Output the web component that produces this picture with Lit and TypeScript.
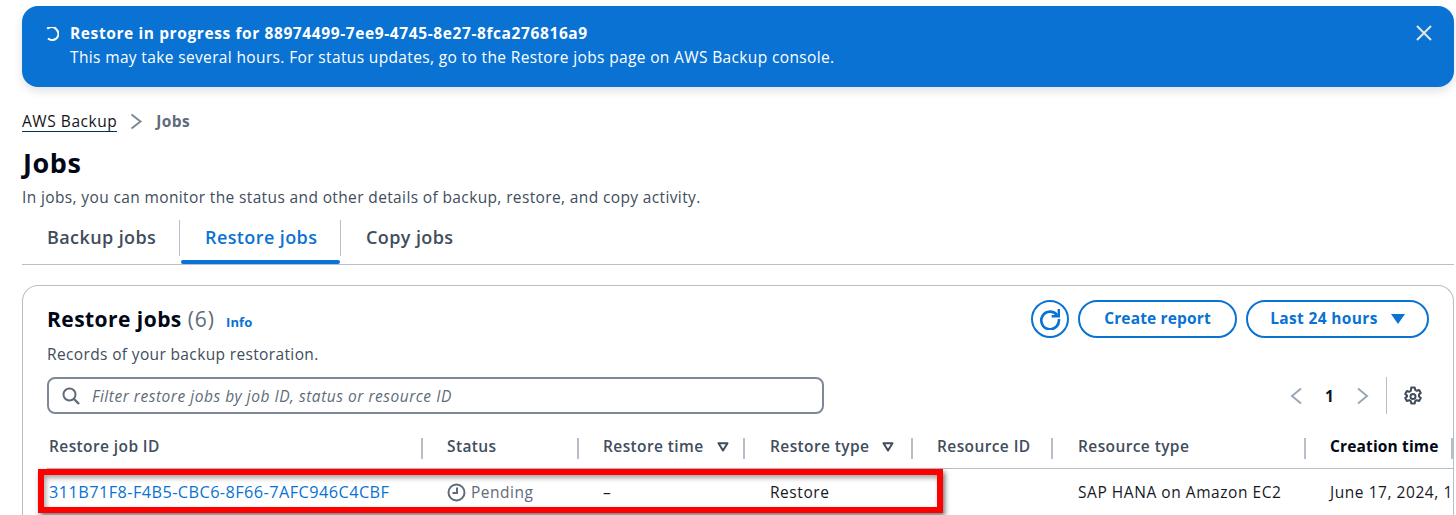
import { LitElement, html, css } from "lit";
import { customElement } from "lit/decorators.js";

const cols = [
  { label: "Restore job ID", cell: "link" },
  { label: "Status", cell: "status" },
  { label: "Restore time", sort: true, cell: "–" },
  { label: "Restore type", sort: true, cell: "Restore" },
  { label: "Resource ID", cell: "" },
  { label: "Resource type", cell: "SAP HANA on Amazon EC2" },
  { label: "Creation time", dark: true, cell: "June 17, 2024, 1" },
];

@customElement("app-root")
export class AppRoot extends LitElement {
  static styles = css`
    :host { display: block; width: 1456px; height: 515px; overflow: hidden; background: #fff; position: relative;
      font-family: "Open Sans", "Noto Sans", sans-serif; font-size: 15.5px; letter-spacing: .36px; color: #0f141a; }
    .page { padding: 6px 2px 0 22px; display: flex; flex-direction: column; }
    .flash { height: 81px; box-sizing: border-box; background: #0972d3; border-radius: 16px; color: #fff; display: flex;
      padding: 15px 22px 0 23px; box-shadow: 0 4px 10px rgba(0,7,22,.12); line-height: 24px; }
    .flash .spin { width: 14px; height: 14px; margin: 6px 11px 0 0; flex: none; }
    .flash .msg { flex: 1; }
    .flash b { font-weight: 700; display: block; letter-spacing: .6px; }
    .flash .x { width: 16px; height: 16px; margin-top: 4px; flex: none; }
    .crumbs { display: flex; align-items: center; height: 24px; margin-top: 22px; }
    .crumbs a { color: #0f141a; border-bottom: 1px solid #033160; line-height: 20px; letter-spacing: .55px; }
    .crumbs svg { margin: 0 13px 0 13px; }
    .crumbs span { color: #5f6b7a; font-weight: 700; }
    h1 { margin: 14px 0 0 1px; font-size: 27px; letter-spacing: .6px; font-weight: 700; line-height: 32px; color: #000716; }
    .sub { margin-top: 7px; line-height: 22px; color: #414d5c; letter-spacing: .37px; }
    .tabs { display: flex; height: 45px; margin-top: 12px; border-bottom: 1px solid #b6bec9; box-sizing: border-box; }
    .tab { position: relative; display: flex; align-items: center; font-weight: 600; font-size: 18px; letter-spacing: .4px; color: #414d5c; padding: 0 25px 2px; height: 36px; box-sizing: border-box; white-space: nowrap; }
    .tab.first { width: 158px; border-right: 1px solid #b6bec9; }
    .tab.active { color: #0972d3; width: 161px; border-right: 1px solid #b6bec9; }
    .tab.active::after { content: ""; position: absolute; left: 1px; right: 0; top: 40px; height: 4px; background: #0972d3; border-radius: 2px; }
    .card { margin-top: 20px; border: 1px solid #b6bec9; border-bottom: 0; border-radius: 16px 16px 0 0; padding: 0 0 0 24px; height: 240px; box-sizing: border-box; overflow: hidden; }
    .card-head { display: flex; justify-content: space-between; padding-right: 24px; height: 91px; }
    .title { margin-top: 17px; font-size: 21px; letter-spacing: .45px; font-weight: 700; line-height: 32px; color: #000716; }
    .title em { font-style: normal; font-weight: 400; color: #5f6b7a; letter-spacing: 1px; }
    .title a { font-size: 13px; letter-spacing: .1px; font-weight: 700; color: #0972d3; margin-left: 5px; }
    .desc { margin-top: 6px; line-height: 20px; color: #414d5c; }
    .actions { display: flex; gap: 9px; margin-top: 14px; }
    .btn { height: 38px; box-sizing: border-box; border: 2px solid #0972d3; border-radius: 20px; color: #0972d3; font-weight: 700; letter-spacing: .15px; padding-bottom: 2px;
      display: flex; align-items: center; justify-content: center; }
    .btn.icon { width: 38px; padding-bottom: 0; }
    .btn.a { width: 159px; }
    .btn.b { width: 183px; gap: 13px; letter-spacing: .35px; }
    .btn.b svg { margin-top: 2px; }
    .filter-row { display: flex; align-items: flex-start; justify-content: space-between; padding-right: 24px; }
    .filter { width: 777px; height: 37px; box-sizing: border-box; border: 2px solid #7d8998; border-radius: 8px; display: flex; align-items: center; padding-left: 13px; gap: 12px;
      font-style: italic; color: #5f6b7a; letter-spacing: .52px; }
    .pager { display: flex; align-items: center; height: 37px; font-weight: 700; color: #0f141a; padding-right: 6px; }
    .pager .num { width: 53px; text-align: center; }
    .pager .gear { margin-left: 17px; padding-left: 16px; border-left: 1px solid #b6bec9; height: 37px; display: flex; align-items: center; }
    .table { margin-top: 15px; width: 1406px; display: grid; grid-template-columns: 376px 156px 166px 168px 140px 253px 147px; }
    .table > :nth-child(7n + 4), .table > :nth-child(7n + 6) { padding-left: 25px; }
    .th { height: 40px; display: flex; align-items: center; border-bottom: 1px solid #b6bec9; box-sizing: border-box; padding-left: 24px; font-weight: 600; letter-spacing: .4px; color: #414d5c; position: relative; padding-bottom: 6px; white-space: nowrap; }
    .th.dark { color: #000716; font-weight: 700; letter-spacing: .15px; }
    .th:first-child { padding-left: 2px; }
    .th:not(:last-child)::after { content: ""; position: absolute; right: 0; top: 9px; height: 21px; width: 2px; background: #b6bec9; }
    .th svg { margin-left: 13px; margin-top: 2px; }
    .td { height: 46px; display: flex; align-items: center; padding-left: 24px; white-space: nowrap; letter-spacing: .55px; color: #16191f; }
    .td.first { padding-left: 2px; }
    .td a { color: #0972d3; font-size: 16.3px; letter-spacing: .43px; }
    .status { color: #5f6b7a; gap: 5px; letter-spacing: .5px; }
    .mark { position: absolute; left: 38px; top: 469px; width: 905px; height: 44px; box-sizing: border-box; border: 6px solid #f00; pointer-events: none;
      box-shadow: 2px 3px 5px rgba(0,0,0,.55), inset 2px 3px 5px rgba(0,0,0,.35); }
  `;

  private sortIcon() {
    return html`<svg width="12" height="10" viewBox="0 0 12 10"><path d="M1.5 1.2h9L6 8.500z" fill="none" stroke="#414d5c" stroke-width="2" stroke-linejoin="round"/></svg>`;
  }

  private cell(c: { cell: string }) {
    if (c.cell === "link") return html`<div class="td first"><a>311B71F8-F4B5-CBC6-8F66-7AFC946C4CBF</a></div>`;
    if (c.cell === "status")
      return html`<div class="td status"><svg width="19" height="19" viewBox="0 0 19 19"><circle cx="9.500" cy="9.500" r="8" fill="none" stroke="#5f6b7a" stroke-width="2"/><path d="M10 4.500v5.500H5.500" fill="none" stroke="#5f6b7a" stroke-width="2"/></svg>Pending</div>`;
    return html`<div class="td">${c.cell}</div>`;
  }

  render() {
    return html`
      <div class="page">
        <div class="flash">
          <svg class="spin" viewBox="0 0 14 14"><path d="M2.200 1.800A6 6 0 0 1 11.800 3 6 6 0 0 1 7 13a6 6 0 0 1-4-1.500" fill="none" stroke="#fff" stroke-width="2"/></svg>
          <div class="msg"><b>Restore in progress for 88974499-7ee9-4745-8e27-8fca276816a9</b>This may take several hours. For status updates, go to the Restore jobs page on AWS Backup console.</div>
          <svg class="x" viewBox="0 0 16 16"><path d="M1 1l14 14M15 1L1 15" stroke="#e3e6ea" stroke-width="2" fill="none"/></svg>
        </div>
        <div class="crumbs"><a>AWS Backup</a>
          <svg width="13" height="17" viewBox="0 0 13 17"><path d="M1.500 1.500l9 7-9 7" fill="none" stroke="#7d8998" stroke-width="2"/></svg>
          <span>Jobs</span></div>
        <h1>Jobs</h1>
        <div class="sub">In jobs, you can monitor the status and other details of backup, restore, and copy activity.</div>
        <div class="tabs">
          <div class="tab first">Backup jobs</div>
          <div class="tab active">Restore jobs</div>
          <div class="tab">Copy jobs</div>
        </div>
        <div class="card">
          <div class="card-head">
            <div>
              <div class="title">Restore jobs <em>(6)</em> <a>Info</a></div>
              <div class="desc">Records of your backup restoration.</div>
            </div>
            <div class="actions">
              <div class="btn icon"><svg width="22" height="22" viewBox="0 0 20 20"><path d="M16.500 6.500A8 8 0 1 0 18 10" fill="none" stroke="#0972d3" stroke-width="2.400"/><path d="M18 1v6.500h-6.500" fill="none" stroke="#0972d3" stroke-width="2.200"/></svg></div>
              <div class="btn a">Create report</div>
              <div class="btn b">Last 24 hours<svg width="14" height="10" viewBox="0 0 14 10"><path d="M0 0h14L7 10z" fill="#0972d3"/></svg></div>
            </div>
          </div>
          <div class="filter-row">
            <div class="filter">
              <svg width="18" height="18" viewBox="0 0 18 18"><circle cx="7.500" cy="7.500" r="6" fill="none" stroke="#5f6b7a" stroke-width="2"/><path d="M12 12l5 5" stroke="#5f6b7a" stroke-width="2.400"/></svg>
              Filter restore jobs by job ID, status or resource ID
            </div>
            <div class="pager">
              <svg width="13" height="18" viewBox="0 0 13 18"><path d="M11 1.500L2 9l9 7.500" fill="none" stroke="#9ba7b6" stroke-width="2"/></svg>
              <span class="num">1</span>
              <svg width="13" height="18" viewBox="0 0 13 18"><path d="M2 1.500L11 9l-9 7.500" fill="none" stroke="#9ba7b6" stroke-width="2"/></svg>
              <span class="gear"><svg width="20" height="20" viewBox="0 0 20 20"><path d="M8.300 1.500h3.400l.5 2.400 1.600.9 2.300-.8 1.700 3-1.800 1.600v1.800l1.800 1.600-1.700 3-2.300-.8-1.600.9-.5 2.400H8.300l-.5-2.400-1.600-.9-2.300.8-1.700-3 1.800-1.600V9.600L2.200 8l1.700-3 2.300.8 1.600-.9z" fill="none" stroke="#414d5c" stroke-width="2" stroke-linejoin="round"/><circle cx="10" cy="10.500" r="2.500" fill="none" stroke="#414d5c" stroke-width="2"/></svg></span>
            </div>
          </div>
          <div class="table">
            ${cols.map((c) => html`<div class="th ${c.dark ? "dark" : ""}">${c.label}${c.sort ? this.sortIcon() : ""}</div>`)}
            ${cols.map((c) => this.cell(c))}
          </div>
        </div>
      </div>
      <div class="mark"></div>
    `;
  }
}
